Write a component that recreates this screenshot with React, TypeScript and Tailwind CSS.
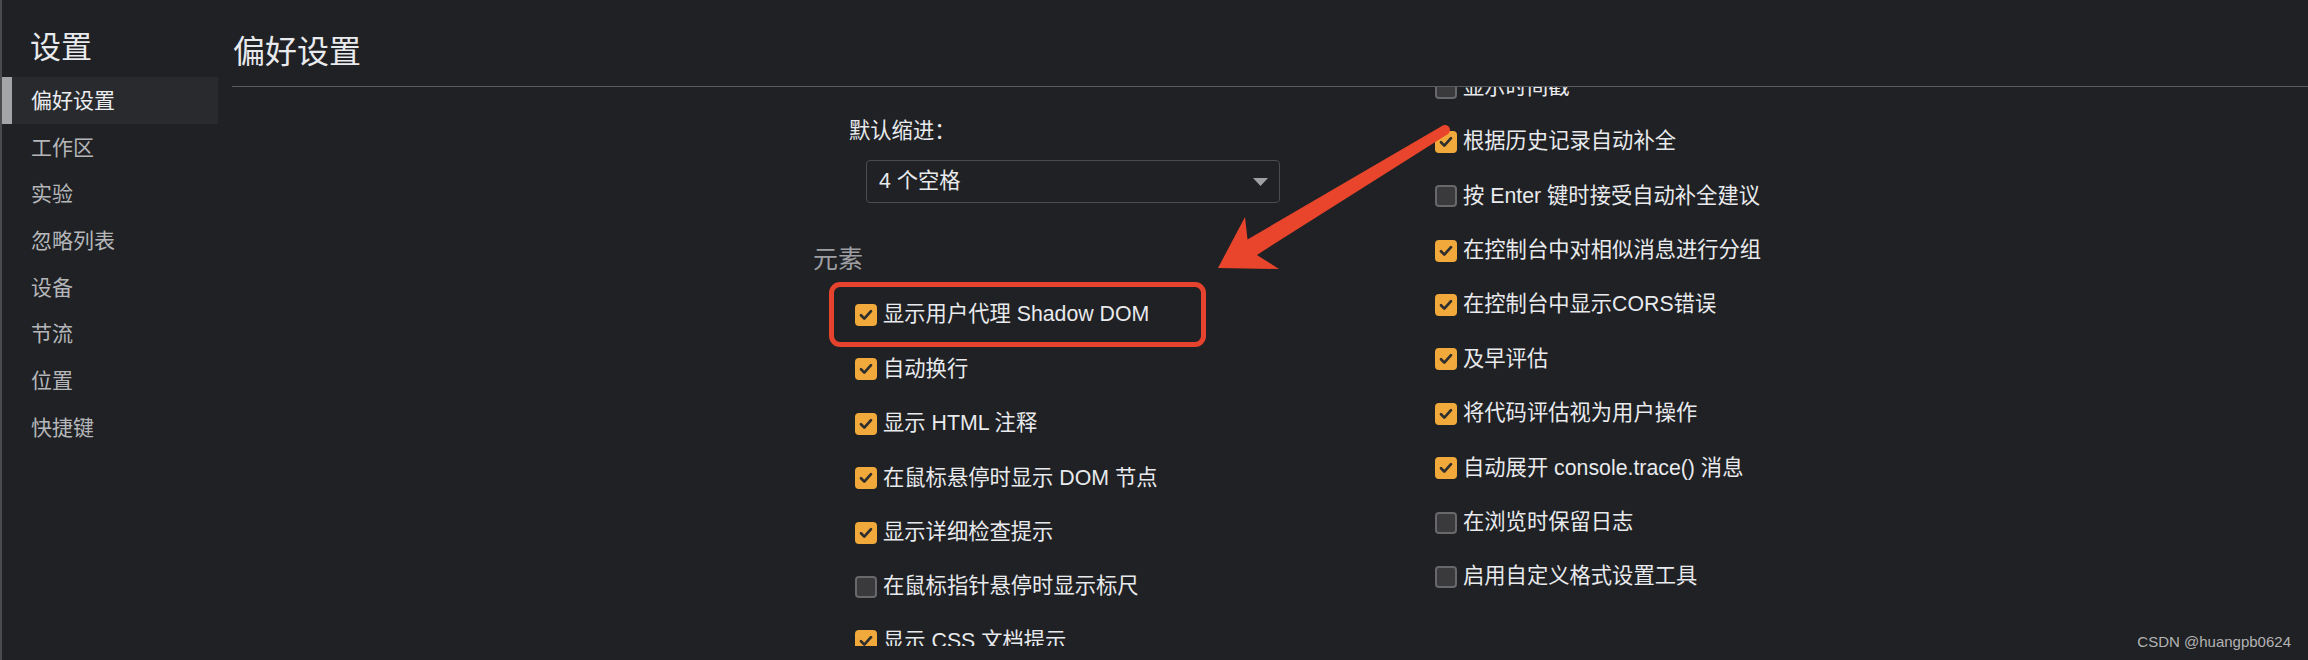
const navItems = ["偏好设置", "工作区", "实验", "忽略列表", "设备", "节流", "位置", "快捷键"];

const elementRows = [
  { label: "显示用户代理 Shadow DOM", checked: true },
  { label: "自动换行", checked: true },
  { label: "显示 HTML 注释", checked: true },
  { label: "在鼠标悬停时显示 DOM 节点", checked: true },
  { label: "显示详细检查提示", checked: true },
  { label: "在鼠标指针悬停时显示标尺", checked: false },
  { label: "显示 CSS 文档提示", checked: true },
];

const consoleRows = [
  { label: "显示时间戳", checked: false },
  { label: "根据历史记录自动补全", checked: true },
  { label: "按 Enter 键时接受自动补全建议", checked: false },
  { label: "在控制台中对相似消息进行分组", checked: true },
  { label: "在控制台中显示CORS错误", checked: true },
  { label: "及早评估", checked: true },
  { label: "将代码评估视为用户操作", checked: true },
  { label: "自动展开 console.trace() 消息", checked: true },
  { label: "在浏览时保留日志", checked: false },
  { label: "启用自定义格式设置工具", checked: false },
];

const CheckBox = ({ checked }: { checked: boolean }) =>
  checked ? (
    <span className="w-[22px] h-[22px] rounded-[4px] bg-[#f2a93b] flex items-center justify-center shrink-0">
      <svg width="16" height="16" viewBox="0 0 16 16">
        <path d="M3 8.3 L6.3 11.6 L13 4.2" fill="none" stroke="#2e2e2e" strokeWidth="2.7" strokeLinecap="round" strokeLinejoin="round" />
      </svg>
    </span>
  ) : (
    <span className="w-[22px] h-[22px] rounded-[4px] bg-[#3a3a3c] border-2 border-[#68686b] shrink-0" />
  );

const Row = ({ label, checked }: { label: string; checked: boolean }) => (
  <div className="h-[54.4px] flex items-center gap-[6px] pl-[42px] text-[21.3px] leading-none text-[#e8eaed] whitespace-nowrap">
    <CheckBox checked={checked} />
    <span>{label}</span>
  </div>
);

export default function App() {
  return (
    <div
      className="relative w-[2308px] h-[660px] overflow-hidden bg-[#202124] flex border-l-2 border-[#4a4b4e]"
      style={{ fontFamily: '"Liberation Sans", "Noto Sans CJK SC", sans-serif' }}
    >
      {/* sidebar */}
      <div className="w-[216px] shrink-0">
        <div className="pl-[28px] pt-[32px] mb-[13px] text-[31px] leading-[32px] text-[#e8eaed]">设置</div>
        {navItems.map((item, i) =>
          i === 0 ? (
            <div key={item} className="h-[46.7px] flex bg-[#292a2e]">
              <span className="w-[10px] bg-[#a5a5a7]" />
              <span className="pl-[19px] self-center text-[21px] leading-none text-[#eceef1]">{item}</span>
            </div>
          ) : (
            <div key={item} className="h-[46.7px] flex items-center pl-[29px] text-[21px] leading-none text-[#b4b6b9]">
              {item}
            </div>
          )
        )}
      </div>

      {/* main */}
      <div className="flex-1 flex flex-col pl-[14px] pb-[14px]">
        <div className="h-[87px] shrink-0 border-b border-[#5a5b5e] pt-[36px] pl-[1px] text-[32px] leading-[32px] text-[#e8eaed]">
          偏好设置
        </div>
        <div className="flex-1 overflow-hidden flex">
          <div className="w-[581px] shrink-0" />
          <div className="w-[580px] shrink-0 mt-[-38.2px]">
            <Row label="检测缩进" checked={true} />
            <div className="mt-[15.8px] pl-[36px] text-[21.3px] leading-[24px] text-[#e8eaed]">默认缩进：</div>
            <div className="mt-[17px] ml-[53px] w-[414px] h-[43px] rounded-[4px] border border-[#4b4c4f] flex items-center justify-between pl-[12px] pr-[11px]">
              <span className="text-[21.3px] leading-none text-[#e8eaed]">4 个空格</span>
              <svg width="15" height="8" viewBox="0 0 15 8">
                <path d="M0 0 H15 L7.5 8 Z" fill="#9ea0a4" />
              </svg>
            </div>
            <div className="mt-[44px] text-[25px] leading-[24px] text-[#9d9fa3]">元素</div>
            <div className="mt-[16.8px]">
              {elementRows.map((r) => (
                <Row key={r.label} label={r.label} checked={r.checked} />
              ))}
            </div>
          </div>
          <div className="w-[580px] shrink-0 mt-[-26.7px]">
            {consoleRows.map((r) => (
              <Row key={r.label} label={r.label} checked={r.checked} />
            ))}
          </div>
        </div>
      </div>

      {/* annotation: highlight box */}
      <div className="absolute left-[827px] top-[282px] w-[377px] h-[65px] rounded-[11px] border-[5px] border-[#e5432d]" />

      {/* annotation: arrow */}
      <svg className="absolute left-0 top-0 pointer-events-none" width="2308" height="660">
        <polygon
          points="1216,268 1243,217 1245.5,239.5 1440.4,125.7 1445.6,134.3 1254.9,254.9 1277,269"
          fill="#e8452c"
        />
        <circle cx="1443" cy="130" r="5" fill="#e8452c" />
      </svg>

      {/* watermark */}
      <div className="absolute right-[17px] bottom-[11px] text-[15px] leading-none text-[#b3b3b3]">CSDN @huangpb0624</div>
    </div>
  );
}
